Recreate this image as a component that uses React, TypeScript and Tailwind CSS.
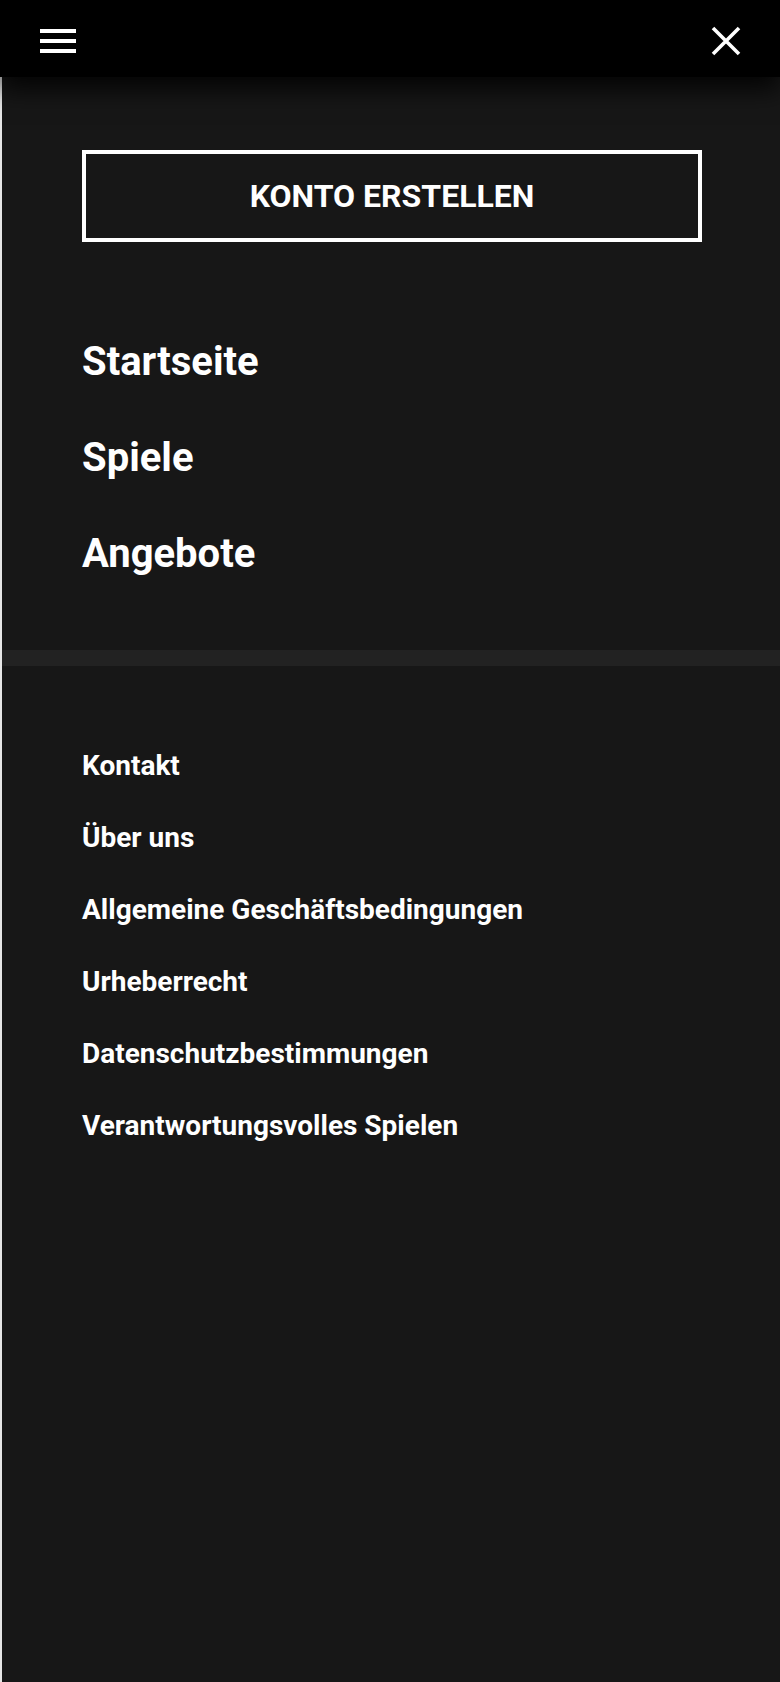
const mainLinks = ["Startseite", "Spiele", "Angebote"];

const footerLinks = [
  "Kontakt",
  "Über uns",
  "Allgemeine Geschäftsbedingungen",
  "Urheberrecht",
  "Datenschutzbestimmungen",
  "Verantwortungsvolles Spielen",
];

const MenuIcon = () => (
  <div className="flex w-[36px] flex-col gap-[6px]">
    <span className="block h-[4px] w-full bg-white" />
    <span className="block h-[4px] w-full bg-white" />
    <span className="block h-[4px] w-full bg-white" />
  </div>
);

const CloseIcon = () => (
  <svg width="30" height="30" viewBox="0 0 30 30" fill="none">
    <path
      d="M2 2L28 28M28 2L2 28"
      stroke="white"
      strokeWidth="3.6"
      strokeLinecap="butt"
    />
  </svg>
);

export default function App() {
  return (
    <div className="min-h-[1682px] bg-[#e6e6e6] font-['Roboto','Liberation_Sans',sans-serif] text-white">
      {/* Top bar */}
      <header className="relative z-10 flex h-[77px] items-start justify-between bg-black pl-[40px] pr-[39px] shadow-[0_12px_24px_rgba(0,0,0,0.85)]">
        <button className="mt-[29px]" aria-label="Menü">
          <MenuIcon />
        </button>
        <button className="mt-[26px]" aria-label="Schließen">
          <CloseIcon />
        </button>
      </header>

      {/* Drawer */}
      <div className="ml-[2px] min-h-[1605px] bg-[#171717]">
        <div className="pl-[80px] pr-[78px] pt-[73px]">
          <a
            href="#"
            className="flex h-[92px] w-full items-center justify-center border-4 border-white text-[32px] font-bold"
          >
            KONTO ERSTELLEN
          </a>

          <nav className="mt-[72px] mb-[48px] flex flex-col">
            {mainLinks.map((label) => (
              <a
                key={label}
                href="#"
                className="block text-[40px] font-bold leading-[96px]"
              >
                {label}
              </a>
            ))}
          </nav>
        </div>

        <div className="h-4 bg-[#222222]" />

        <nav className="flex flex-col pl-[80px] pr-[78px] pt-[64px]">
          {footerLinks.map((label) => (
            <a
              key={label}
              href="#"
              className="block text-[28px] font-bold leading-[72px]"
            >
              {label}
            </a>
          ))}
        </nav>
      </div>
    </div>
  );
}
